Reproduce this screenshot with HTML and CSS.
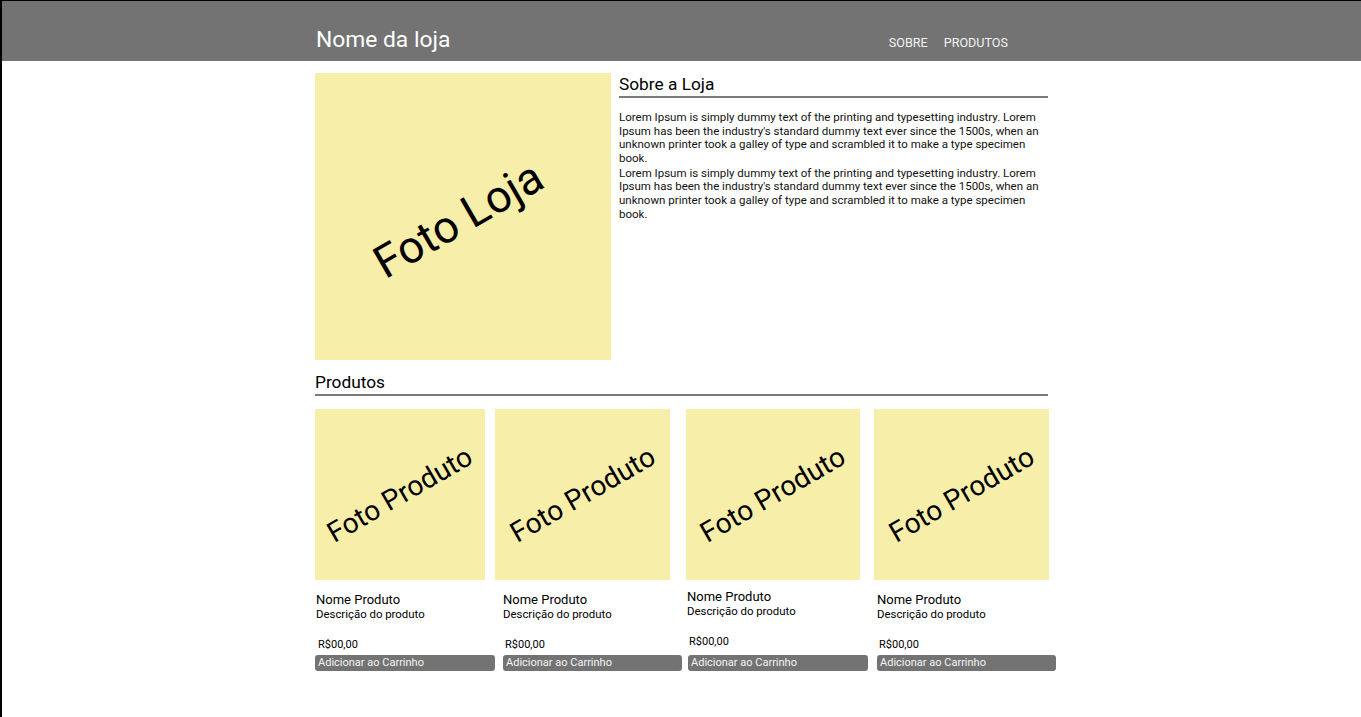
FILE: index.html
```html
<!DOCTYPE html>
<html lang="pt-BR">
<head>
<meta charset="utf-8">
<title>Nome da loja</title>
<link rel="stylesheet" href="styles.css">
</head>
<body>
<header class="topbar">
  <div class="topbar-inner">
    <div class="brand">Nome da loja</div>
    <nav class="nav">
      <a class="nav-link" href="#sobre">SOBRE</a>
      <a class="nav-link" href="#produtos">PRODUTOS</a>
    </nav>
  </div>
</header>
<main class="container">
  <section class="about" id="sobre">
    <div class="store-photo"><span class="photo-label photo-label--big">Foto Loja</span></div>
    <div class="about-text">
      <h2 class="section-title">Sobre a Loja</h2>
      <p class="para">Lorem Ipsum is simply dummy text of the printing and typesetting industry. Lorem Ipsum has been the industry's standard dummy text ever since the 1500s, when an unknown printer took a galley of type and scrambled it to make a type specimen book.</p>
      <p class="para">Lorem Ipsum is simply dummy text of the printing and typesetting industry. Lorem Ipsum has been the industry's standard dummy text ever since the 1500s, when an unknown printer took a galley of type and scrambled it to make a type specimen book.</p>
    </div>
  </section>
  <section class="products" id="produtos">
    <h2 class="section-title section-title--wide">Produtos</h2>
    <div class="product-row">
      <article class="card card--1">
        <div class="thumb"><span class="photo-label">Foto Produto</span></div>
        <div class="info">
          <div class="name">Nome Produto</div>
          <div class="desc">Descrição do produto</div>
          <div class="price">R$00,00</div>
        </div>
        <button class="add-btn">Adicionar ao Carrinho</button>
      </article>
      <article class="card card--2">
        <div class="thumb"><span class="photo-label">Foto Produto</span></div>
        <div class="info">
          <div class="name">Nome Produto</div>
          <div class="desc">Descrição do produto</div>
          <div class="price">R$00,00</div>
        </div>
        <button class="add-btn">Adicionar ao Carrinho</button>
      </article>
      <article class="card card--3">
        <div class="thumb"><span class="photo-label">Foto Produto</span></div>
        <div class="info">
          <div class="name">Nome Produto</div>
          <div class="desc">Descrição do produto</div>
          <div class="price">R$00,00</div>
        </div>
        <button class="add-btn">Adicionar ao Carrinho</button>
      </article>
      <article class="card card--4">
        <div class="thumb"><span class="photo-label">Foto Produto</span></div>
        <div class="info">
          <div class="name">Nome Produto</div>
          <div class="desc">Descrição do produto</div>
          <div class="price">R$00,00</div>
        </div>
        <button class="add-btn">Adicionar ao Carrinho</button>
      </article>
    </div>
  </section>
</main>
</body>
</html>
```

FILE: styles.css
```css
* { box-sizing: border-box; }

html, body { height: 100%; }

body {
  margin: 0;
  min-height: 717px;
  background: #fff;
  border-top: 1px solid #000;
  border-left: 2px solid #000;
  font-family: Roboto, "Liberation Sans", Arial, sans-serif;
  color: #000;
}

.topbar {
  height: 60px;
  background: #737373;
}

.topbar-inner {
  width: 733px;
  margin: 0 auto;
  padding-top: 26px;
  display: flex;
  align-items: baseline;
  justify-content: space-between;
}

.brand {
  font-size: 22.8px;
  line-height: 26px;
  color: #fff;
  padding-left: 1px;
}

.nav {
  display: flex;
  gap: 16px;
  padding-right: 40px;
}

.nav-link {
  font-size: 12.6px;
  line-height: 15px;
  color: #f2f2f2;
  text-decoration: none;
}

.container {
  width: 733px;
  margin: 0 auto;
  padding-top: 12px;
}

.about {
  display: flex;
  gap: 8px;
}

.store-photo {
  flex: 0 0 296px;
  height: 287px;
  background: #f7eeaa;
  display: flex;
  align-items: center;
  justify-content: center;
  overflow: hidden;
}

.photo-label {
  display: block;
  transform: rotate(-30deg);
  font-size: 28px;
  line-height: 1;
  white-space: nowrap;
  color: #000;
}

.photo-label--big {
  font-size: 45px;
  margin-top: 6px;
  margin-left: -10px;
}

.about-text {
  flex: 1;
}

.section-title {
  margin: 0;
  font-size: 17.3px;
  line-height: 22px;
  font-weight: 400;
  padding-bottom: 1px;
  border-bottom: 2px solid #7b7b7b;
}

.para {
  margin: 0;
  font-size: 11.5px;
  line-height: 13.6px;
  color: #111;
}

.about-text .section-title + .para {
  margin-top: 13px;
}

.para + .para {
  margin-top: 1.5px;
}

.products {
  padding-top: 11px;
}

.product-row {
  display: flex;
  align-items: flex-start;
  margin-top: 13px;
}

.card {
  display: flex;
  flex-direction: column;
}

.thumb {
  height: 171px;
  background: #f7eeaa;
  display: flex;
  align-items: center;
  justify-content: center;
  overflow: hidden;
}

.info {
  padding-top: 12px;
  height: 75px;
}

.name {
  font-size: 13px;
  line-height: 15px;
  padding-left: 1px;
}

.desc {
  font-size: 11.4px;
  line-height: 14px;
  padding-left: 1px;
}

.price {
  margin-top: 17px;
  font-size: 11px;
  line-height: 14px;
  padding-left: 3px;
}

.add-btn {
  height: 16px;
  margin: 0;
  padding: 0 0 0 3px;
  border: 0;
  border-radius: 3px;
  background: #737373;
  color: #f4f4f4;
  font-family: inherit;
  font-size: 11px;
  line-height: 16px;
  text-align: left;
}

.card--1 { width: 180px; }
.card--1 .thumb { width: 170px; }
.card--1 .add-btn { width: 180px; }

.card--2 { width: 187px; }
.card--2 .thumb { width: 175px; }
.card--2 .info { padding-left: 7px; }
.card--2 .add-btn { width: 179px; margin-left: 8px; }

.card--3 { width: 183px; margin-left: 4px; }
.card--3 .thumb { width: 174px; }
.card--3 .info { padding-top: 9px; }
.card--3 .add-btn { width: 180px; margin-left: 2px; }

.card--4 { width: 183px; margin-left: 6px; }
.card--4 .thumb { width: 175px; }
.card--4 .info { padding-left: 2px; }
.card--4 .add-btn { width: 179px; margin-left: 3px; }
```
